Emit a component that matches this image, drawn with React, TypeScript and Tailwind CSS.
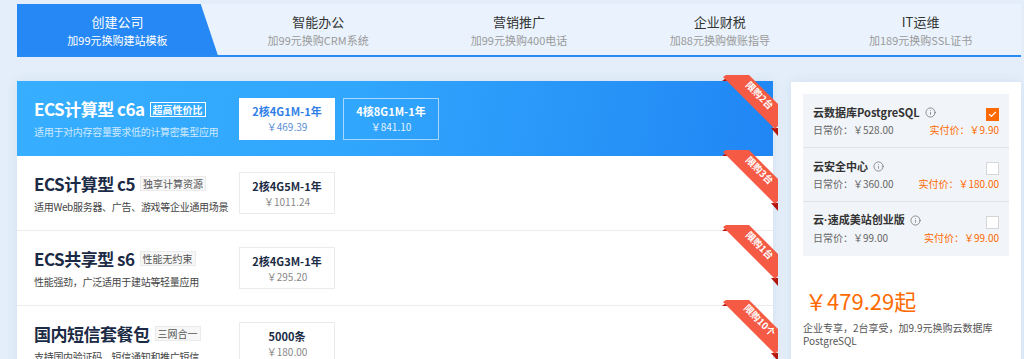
import { Info, Check } from "lucide-react";

const tabs = [
  { title: "创建公司", sub: "加99元换购建站模板" },
  { title: "智能办公", sub: "加99元换购CRM系统" },
  { title: "营销推广", sub: "加99元换购400电话" },
  { title: "企业财税", sub: "加88元换购做账指导" },
  { title: "IT运维", sub: "加189元换购SSL证书" },
];

const products = [
  {
    title: "ECS计算型 c6a",
    tag: "超高性价比",
    desc: "适用于对内存容量要求低的计算密集型应用",
    limit: "限购2台",
    opts: [
      { name: "2核4G1M-1年", price: "￥469.39" },
      { name: "4核8G1M-1年", price: "￥841.10" },
    ],
  },
  {
    title: "ECS计算型 c5",
    tag: "独享计算资源",
    desc: "适用Web服务器、广告、游戏等企业通用场景",
    limit: "限购3台",
    opts: [{ name: "2核4G5M-1年", price: "￥1011.24" }],
  },
  {
    title: "ECS共享型 s6",
    tag: "性能无约束",
    desc: "性能强劲，广泛适用于建站等轻量应用",
    limit: "限购1台",
    opts: [{ name: "2核4G3M-1年", price: "￥295.20" }],
  },
  {
    title: "国内短信套餐包",
    tag: "三网合一",
    desc: "支持国内验证码、短信通知和推广短信",
    limit: "限购10个",
    opts: [{ name: "5000条", price: "￥180.00" }],
  },
];

const addons = [
  { name: "云数据库PostgreSQL", normal: "￥528.00", pay: "￥9.90", checked: true },
  { name: "云安全中心", normal: "￥360.00", pay: "￥180.00", checked: false },
  { name: "云·速成美站创业版", normal: "￥99.00", pay: "￥99.00", checked: false },
];

const Ribbon = ({ text }: { text: string }) => (
  <svg
    className="absolute top-[-7px] right-[-7px] z-10"
    width="60"
    height="64"
    viewBox="0 0 60 64"
  >
    <polygon points="2,7 9,2 12,7" fill="#b3160c" />
    <polygon points="51,54 58,54 58,62" fill="#b3160c" />
    <polygon points="3,3 6,1 29,1 58,30 58,52 55,55" fill="#f45a44" />
    <text
      x="39"
      y="22"
      fill="#ffffff"
      fontSize="9.5"
      fontWeight="bold"
      textAnchor="middle"
      dominantBaseline="middle"
      transform="rotate(45 39 22)"
      style={{ fontFamily: "'Noto Sans CJK SC', sans-serif" }}
    >
      {text}
    </text>
  </svg>
);

export default function App() {
  return (
    <div className="h-[359px] overflow-hidden bg-[#e4eefa] pl-[17px] pr-[3px] pt-[4px] font-['Noto_Sans_CJK_SC','Liberation_Sans',sans-serif]">
      {/* tabs */}
      <div className="flex h-[53px] border-b-2 border-[#2a8af5] bg-[#eaf3fd]">
        {tabs.map((t, i) => (
          <div
            key={t.title}
            className={
              i === 0
                ? "flex flex-1 flex-col items-center justify-center bg-[#2688f5] [clip-path:polygon(0_0,91.5%_0,100%_100%,0_100%)]"
                : "flex flex-1 flex-col items-center justify-center"
            }
          >
            <div className={i === 0 ? "text-[13px] leading-[18px] text-white" : "text-[13px] leading-[18px] text-[#333]"}>
              {t.title}
            </div>
            <div className={i === 0 ? "mt-[2px] text-[11px] leading-[14px] text-white" : "mt-[2px] text-[11px] leading-[14px] text-[#9a9a9a]"}>
              {t.sub}
            </div>
          </div>
        ))}
      </div>

      <div className="mt-[24px] flex gap-[18px]">
        {/* product list */}
        <div className="w-[756px] shadow-[0_0_12px_rgba(40,80,140,0.08)]">
          {products.map((p, i) => {
            const hot = i === 0;
            return (
              <div
                key={p.title}
                className={
                  hot
                    ? "relative flex h-[75px] items-center bg-[linear-gradient(100deg,#37aeff_0%,#31a6fd_45%,#2086f4_100%)] pl-[17px]"
                    : "relative flex h-[75px] items-center border-b border-[#ececec] bg-white pl-[17px]"
                }
              >
                <div className="w-[205px]">
                  <div className="flex items-center gap-[5px]">
                    <span
                      className={
                        hot
                          ? "text-[17px] font-bold leading-[22px] tracking-[-0.5px] text-white"
                          : "text-[17px] font-bold leading-[22px] tracking-[-0.5px] text-[#1b2b45]"
                      }
                    >
                      {p.title}
                    </span>
                    <span
                      className={
                        hot
                          ? "border border-white px-[2px] text-[10px] leading-[13px] font-bold text-white"
                          : "border border-[#ebebeb] bg-[#f7f7f7] px-[2px] text-[10px] leading-[13px] text-[#555]"
                      }
                    >
                      {p.tag}
                    </span>
                  </div>
                  <div
                    className={
                      hot
                        ? "mt-[5px] whitespace-nowrap text-[10px] leading-[14px] tracking-[-0.3px] text-[#cfe9ff]"
                        : "mt-[5px] whitespace-nowrap text-[10px] leading-[14px] tracking-[-0.3px] text-[#444]"
                    }
                  >
                    {p.desc}
                  </div>
                </div>
                <div className="flex gap-[8px]">
                  {p.opts.map((o, j) => {
                    const cls = hot
                      ? j === 0
                        ? "border border-white bg-white"
                        : "border border-[#a9d8ff]"
                      : "border border-[#ebebeb] bg-white";
                    const nameCls = hot
                      ? j === 0
                        ? "text-[#2f7fe8]"
                        : "text-white"
                      : "text-[#1b2b45]";
                    const priceCls = hot
                      ? j === 0
                        ? "text-[#5b8fd6]"
                        : "text-[#e5f3ff]"
                      : "text-[#888]";
                    return (
                      <div
                        key={o.name}
                        className={`flex h-[42px] w-[96px] flex-col items-center justify-center ${cls}`}
                      >
                        <div className={`text-[11px] font-bold leading-[14px] ${nameCls}`}>{o.name}</div>
                        <div className={`mt-[2px] text-[10px] leading-[13px] ${priceCls}`}>{o.price}</div>
                      </div>
                    );
                  })}
                </div>
                <Ribbon text={p.limit} />
              </div>
            );
          })}
        </div>

        {/* right panel */}
        <div className="mt-[1px] h-[300px] flex-1 bg-white px-[12px] pt-[12px] shadow-[0_0_12px_rgba(40,80,140,0.08)]">
          <div className="bg-[#f1f4f8]">
            {addons.map((a, i) => (
              <div
                key={a.name}
                className={
                  i < addons.length - 1
                    ? "h-[54px] border-b border-[#dfe3e8] px-[10px] pt-[9px]"
                    : "h-[54px] px-[10px] pt-[9px]"
                }
              >
                <div className="flex items-center justify-between">
                  <div className="flex items-center gap-[5px]">
                    <span className="text-[11px] font-bold leading-[15px] text-[#333]">
                      {a.name.startsWith("云·") ? (
                        <>
                          云<span className="font-['Liberation_Sans',sans-serif]">·</span>
                          {a.name.slice(2)}
                        </>
                      ) : (
                        a.name
                      )}
                    </span>
                    <Info size={11} strokeWidth={1.5} color="#666" />
                  </div>
                  {a.checked ? (
                    <div className="mt-[5px] flex h-[13px] w-[13px] items-center justify-center bg-[#ff6a00]">
                      <Check size={9} strokeWidth={3} color="#fff" />
                    </div>
                  ) : (
                    <div className="mt-[5px] h-[13px] w-[13px] border border-[#d6d6d6] bg-white" />
                  )}
                </div>
                <div className="mt-[2px] flex items-end justify-between">
                  <span className="text-[10px] leading-[14px] text-[#666]">日常价：{a.normal}</span>
                  <span className="text-[10px] leading-[14px] text-[#ff6a00]">实付价：{a.pay}</span>
                </div>
              </div>
            ))}
          </div>
          <div className="mt-[31px] pl-[2px] text-[22px] leading-[26px] text-[#ff6a00]">￥479.29起</div>
          <div className="mt-[8px] text-[10px] leading-[13px] text-[#555]">
            企业专享，2台享受，加9.9元换购云数据库PostgreSQL
          </div>
        </div>
      </div>
    </div>
  );
}
